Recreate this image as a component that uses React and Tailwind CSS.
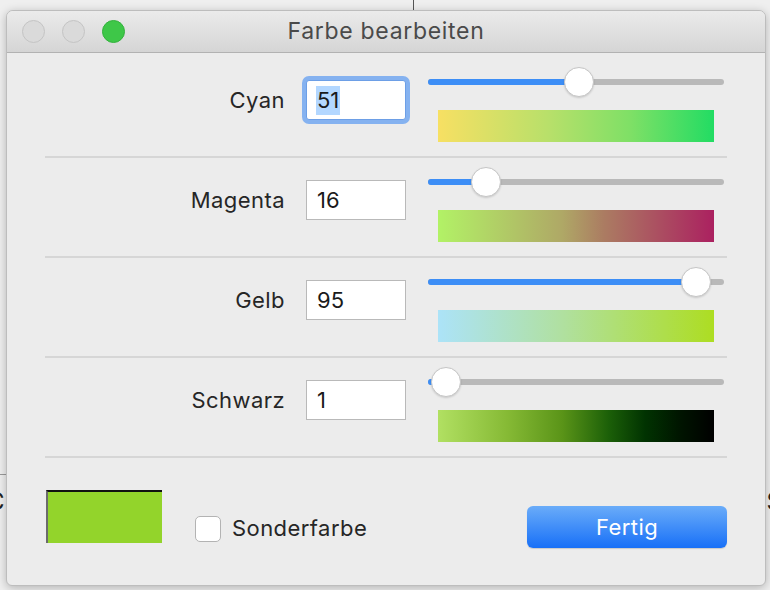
import React from 'react';

const rows = [
  { label: 'Cyan', value: 51, focused: true, gradient: 'bg-[linear-gradient(to_right,#f7e063,#b8e06a_40%,#7ee066_70%,#22dc63)]' },
  { label: 'Magenta', value: 16, gradient: 'bg-[linear-gradient(to_right,#b2f266,#afa866_45%,#ab7c62_60%,#ab2160)]' },
  { label: 'Gelb', value: 95, gradient: 'bg-[linear-gradient(to_right,#ace3f8,#b0e0a0_45%,#addd22)]' },
  { label: 'Schwarz', value: 1, gradient: 'bg-[linear-gradient(to_right,#b1e062,#86ba35_25%,#5a9418_45%,#1b5f08_62%,#013301_75%,#001400_88%,#000)]' },
];

const Slider = ({ value }) => {
  const x = value * 2.66;
  return (
    <div className="relative h-[30px] w-[296px]">
      <div className="absolute left-0 right-0 top-[12px] h-[6px] rounded-full bg-[#b9b9b9]"></div>
      <div className="absolute left-0 top-[12px] h-[6px] rounded-full bg-[#3d8ef6]" style={{ width: `${x + 15}px` }}></div>
      <div
        className="absolute top-0 h-[30px] w-[30px] rounded-full bg-white border border-[#c6c6c6] shadow-[0_1px_2px_rgba(0,0,0,0.15)]"
        style={{ left: `${x}px` }}
      ></div>
    </div>
  );
};

const Row = ({ label, value, focused, gradient }) => (
  <div className="flex h-[98px] items-start">
    <div className="mt-[22px] flex items-center">
      <span className="w-[240px] text-right text-[22px] tracking-[0.02em] text-[#262626]">{label}</span>
      <div className="ml-[21px]">
        {focused ? (
          <div className="h-[40px] w-[100px] rounded-[3px] border border-[#6d9fe6] bg-white pl-[9px] ring-4 ring-[#85b2f0] flex items-center">
            <span className="bg-[#b3d7ff] px-[1px] text-[22px] leading-[29px] text-[#1a1a1a]">{value}</span>
          </div>
        ) : (
          <div className="h-[40px] w-[100px] border border-[#b9b9b9] bg-white pl-[10px] flex items-center text-[22px] text-[#1a1a1a]">
            {value}
          </div>
        )}
      </div>
    </div>
    <div className="ml-[22px] flex flex-col pt-[9px]">
      <Slider value={value} />
      <div className={`ml-[10px] mt-[13px] h-[32px] w-[276px] ${gradient}`}></div>
    </div>
  </div>
);

export default function App() {
  return (
    <div className="relative h-[590px] w-[770px] overflow-hidden bg-[#efefef] font-['Inter','Liberation_Sans',sans-serif]">
      {/* page behind the dialog */}
      <div className="absolute left-[413px] top-0 h-[10px] w-px bg-[#555]"></div>
      <div className="absolute left-0 top-[474px] h-px w-[8px] bg-[#9a9a9a]"></div>
      <div className="absolute left-[-13px] top-[484px] text-[24px] text-[#222]">C</div>
      <div className="absolute right-[-12px] top-[484px] text-[24px] text-[#222]">S</div>
      <div className="absolute left-[12px] top-[583px] whitespace-nowrap text-[24px] text-[#111]">
        Farben mit verschiedenen Methoden in Illustrator erstellen. Sie können
      </div>

      {/* dialog window */}
      <div className="absolute left-[6px] top-[10px] h-[576px] w-[760px] overflow-hidden rounded-t-[7px] rounded-b-[6px] border border-[#bdbdbd] bg-[#ececec] shadow-[0_2px_10px_rgba(0,0,0,0.25)]">
        <div className="relative flex h-[42px] items-center border-b border-[#b2b2b2] bg-[linear-gradient(#ebebeb,#d5d5d5)] px-[15px]">
          <div className="flex gap-[17px]">
            <span className="h-[23px] w-[23px] rounded-full border border-[#c4c4c4] bg-[#dadada]"></span>
            <span className="h-[23px] w-[23px] rounded-full border border-[#c4c4c4] bg-[#dadada]"></span>
            <span className="h-[23px] w-[23px] rounded-full border border-[#33b23c] bg-[#3ec748]"></span>
          </div>
          <div className="absolute inset-0 flex items-center justify-center text-[23px] tracking-[0.03em] text-[#4a4a4a]">
            Farbe bearbeiten
          </div>
        </div>

        <div className="px-[38px] pt-[5px]">
          {rows.map((r) => (
            <div key={r.label}>
              <Row {...r} />
              <div className="h-[2px] bg-[#d6d6d6]"></div>
            </div>
          ))}

          <div className="flex items-start pt-[32px]">
            <div className="ml-[1px] h-[53px] w-[116px] border-l-2 border-t-2 border-l-[#6b6b6b] border-t-[#111] bg-[#93d42b]"></div>
            <label className="ml-[33px] mt-[22px] flex items-center">
              <span className="h-[26px] w-[26px] rounded-[5px] border border-[#b3b3b3] bg-white"></span>
              <span className="ml-[11px] text-[22px] tracking-[0.02em] text-[#262626]">Sonderfarbe</span>
            </label>
            <button className="ml-auto mt-[16px] h-[42px] w-[200px] rounded-[6px] bg-[linear-gradient(#6aacf9,#1870f7)] text-[22px] tracking-[0.02em] text-white shadow-[0_1px_1px_rgba(0,0,0,0.15)]">
              Fertig
            </button>
          </div>
        </div>
      </div>
    </div>
  );
}
